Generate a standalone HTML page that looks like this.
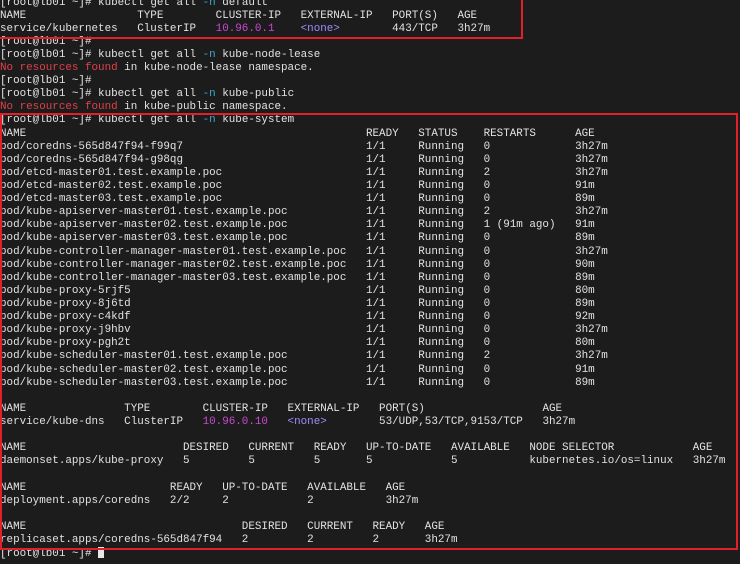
<!DOCTYPE html>
<html><head><meta charset="utf-8"><style>
html,body{margin:0;padding:0;background:#1c1c1c;width:740px;height:564px;overflow:hidden}
#t{position:absolute;left:0;top:-3.5px;font-family:"Liberation Mono","DejaVu Sans Mono",monospace;font-size:10.9px;color:#e2e2e2;}
.l{position:relative;height:13.12px;line-height:13.12px;white-space:pre}
.l span{position:absolute;top:0}
.r{color:#e0404a}.b{color:#3ea8d0}.p{color:#c84ad0}.n{color:#a08cff}
.box{position:absolute;border:2.5px solid #e0202a;box-sizing:border-box}
.cur{display:inline-block;width:6px;height:11px;background:#e8e8e8;vertical-align:-2px}
</style></head><body>
<div id="t">
<div class="l">[root@lb01 ~]# kubectl get all <span class="b" style="position:static">-n</span> default</div>
<div class="l"><span style="left:0">NAME</span><span style="left:21ch">TYPE</span><span style="left:33ch">CLUSTER-IP</span><span style="left:46ch">EXTERNAL-IP</span><span style="left:60ch">PORT(S)</span><span style="left:70ch">AGE</span></div>
<div class="l"><span style="left:0">service/kubernetes</span><span style="left:21ch">ClusterIP</span><span class="p" style="left:33ch">10.96.0.1</span><span class="n" style="left:46ch">&lt;none&gt;</span><span style="left:60ch">443/TCP</span><span style="left:70ch">3h27m</span></div>
<div class="l">[root@lb01 ~]#</div>
<div class="l">[root@lb01 ~]# kubectl get all <span class="b" style="position:static">-n</span> kube-node-lease</div>
<div class="l"><span class="r" style="position:static">No resources found</span> in kube-node-lease namespace.</div>
<div class="l">[root@lb01 ~]#</div>
<div class="l">[root@lb01 ~]# kubectl get all <span class="b" style="position:static">-n</span> kube-public</div>
<div class="l"><span class="r" style="position:static">No resources found</span> in kube-public namespace.</div>
<div class="l">[root@lb01 ~]# kubectl get all <span class="b" style="position:static">-n</span> kube-system</div>
<div class="l"><span style="left:0">NAME</span><span style="left:56ch">READY</span><span style="left:64ch">STATUS</span><span style="left:74ch">RESTARTS</span><span style="left:88ch">AGE</span></div>
<div class="l"><span style="left:0">pod/coredns-565d847f94-f99q7</span><span style="left:56ch">1/1</span><span style="left:64ch">Running</span><span style="left:74ch">0</span><span style="left:88ch">3h27m</span></div>
<div class="l"><span style="left:0">pod/coredns-565d847f94-g98qg</span><span style="left:56ch">1/1</span><span style="left:64ch">Running</span><span style="left:74ch">0</span><span style="left:88ch">3h27m</span></div>
<div class="l"><span style="left:0">pod/etcd-master01.test.example.poc</span><span style="left:56ch">1/1</span><span style="left:64ch">Running</span><span style="left:74ch">2</span><span style="left:88ch">3h27m</span></div>
<div class="l"><span style="left:0">pod/etcd-master02.test.example.poc</span><span style="left:56ch">1/1</span><span style="left:64ch">Running</span><span style="left:74ch">0</span><span style="left:88ch">91m</span></div>
<div class="l"><span style="left:0">pod/etcd-master03.test.example.poc</span><span style="left:56ch">1/1</span><span style="left:64ch">Running</span><span style="left:74ch">0</span><span style="left:88ch">89m</span></div>
<div class="l"><span style="left:0">pod/kube-apiserver-master01.test.example.poc</span><span style="left:56ch">1/1</span><span style="left:64ch">Running</span><span style="left:74ch">2</span><span style="left:88ch">3h27m</span></div>
<div class="l"><span style="left:0">pod/kube-apiserver-master02.test.example.poc</span><span style="left:56ch">1/1</span><span style="left:64ch">Running</span><span style="left:74ch">1 (91m ago)</span><span style="left:88ch">91m</span></div>
<div class="l"><span style="left:0">pod/kube-apiserver-master03.test.example.poc</span><span style="left:56ch">1/1</span><span style="left:64ch">Running</span><span style="left:74ch">0</span><span style="left:88ch">89m</span></div>
<div class="l"><span style="left:0">pod/kube-controller-manager-master01.test.example.poc</span><span style="left:56ch">1/1</span><span style="left:64ch">Running</span><span style="left:74ch">0</span><span style="left:88ch">3h27m</span></div>
<div class="l"><span style="left:0">pod/kube-controller-manager-master02.test.example.poc</span><span style="left:56ch">1/1</span><span style="left:64ch">Running</span><span style="left:74ch">0</span><span style="left:88ch">90m</span></div>
<div class="l"><span style="left:0">pod/kube-controller-manager-master03.test.example.poc</span><span style="left:56ch">1/1</span><span style="left:64ch">Running</span><span style="left:74ch">0</span><span style="left:88ch">89m</span></div>
<div class="l"><span style="left:0">pod/kube-proxy-5rjf5</span><span style="left:56ch">1/1</span><span style="left:64ch">Running</span><span style="left:74ch">0</span><span style="left:88ch">80m</span></div>
<div class="l"><span style="left:0">pod/kube-proxy-8j6td</span><span style="left:56ch">1/1</span><span style="left:64ch">Running</span><span style="left:74ch">0</span><span style="left:88ch">89m</span></div>
<div class="l"><span style="left:0">pod/kube-proxy-c4kdf</span><span style="left:56ch">1/1</span><span style="left:64ch">Running</span><span style="left:74ch">0</span><span style="left:88ch">92m</span></div>
<div class="l"><span style="left:0">pod/kube-proxy-j9hbv</span><span style="left:56ch">1/1</span><span style="left:64ch">Running</span><span style="left:74ch">0</span><span style="left:88ch">3h27m</span></div>
<div class="l"><span style="left:0">pod/kube-proxy-pgh2t</span><span style="left:56ch">1/1</span><span style="left:64ch">Running</span><span style="left:74ch">0</span><span style="left:88ch">80m</span></div>
<div class="l"><span style="left:0">pod/kube-scheduler-master01.test.example.poc</span><span style="left:56ch">1/1</span><span style="left:64ch">Running</span><span style="left:74ch">2</span><span style="left:88ch">3h27m</span></div>
<div class="l"><span style="left:0">pod/kube-scheduler-master02.test.example.poc</span><span style="left:56ch">1/1</span><span style="left:64ch">Running</span><span style="left:74ch">0</span><span style="left:88ch">91m</span></div>
<div class="l"><span style="left:0">pod/kube-scheduler-master03.test.example.poc</span><span style="left:56ch">1/1</span><span style="left:64ch">Running</span><span style="left:74ch">0</span><span style="left:88ch">89m</span></div>
<div class="l"> </div>
<div class="l"><span style="left:0">NAME</span><span style="left:19ch">TYPE</span><span style="left:31ch">CLUSTER-IP</span><span style="left:44ch">EXTERNAL-IP</span><span style="left:58ch">PORT(S)</span><span style="left:83ch">AGE</span></div>
<div class="l"><span style="left:0">service/kube-dns</span><span style="left:19ch">ClusterIP</span><span class="p" style="left:31ch">10.96.0.10</span><span class="n" style="left:44ch">&lt;none&gt;</span><span style="left:58ch">53/UDP,53/TCP,9153/TCP</span><span style="left:83ch">3h27m</span></div>
<div class="l"> </div>
<div class="l"><span style="left:0">NAME</span><span style="left:28ch">DESIRED</span><span style="left:38ch">CURRENT</span><span style="left:48ch">READY</span><span style="left:56ch">UP-TO-DATE</span><span style="left:69ch">AVAILABLE</span><span style="left:81ch">NODE SELECTOR</span><span style="left:106ch">AGE</span></div>
<div class="l"><span style="left:0">daemonset.apps/kube-proxy</span><span style="left:28ch">5</span><span style="left:38ch">5</span><span style="left:48ch">5</span><span style="left:56ch">5</span><span style="left:69ch">5</span><span style="left:81ch">kubernetes.io/os=linux</span><span style="left:106ch">3h27m</span></div>
<div class="l"> </div>
<div class="l"><span style="left:0">NAME</span><span style="left:26ch">READY</span><span style="left:34ch">UP-TO-DATE</span><span style="left:47ch">AVAILABLE</span><span style="left:59ch">AGE</span></div>
<div class="l"><span style="left:0">deployment.apps/coredns</span><span style="left:26ch">2/2</span><span style="left:34ch">2</span><span style="left:47ch">2</span><span style="left:59ch">3h27m</span></div>
<div class="l"> </div>
<div class="l"><span style="left:0">NAME</span><span style="left:37ch">DESIRED</span><span style="left:47ch">CURRENT</span><span style="left:57ch">READY</span><span style="left:65ch">AGE</span></div>
<div class="l"><span style="left:0">replicaset.apps/coredns-565d847f94</span><span style="left:37ch">2</span><span style="left:47ch">2</span><span style="left:57ch">2</span><span style="left:65ch">3h27m</span></div>
<div class="l">[root@lb01 ~]# <span class="cur" style="position:static"></span></div>
</div>
<div class="box" style="left:-3px;top:-4px;width:526px;height:43px"></div>
<div class="box" style="left:0;top:113px;width:738px;height:437px"></div>
</body></html>
